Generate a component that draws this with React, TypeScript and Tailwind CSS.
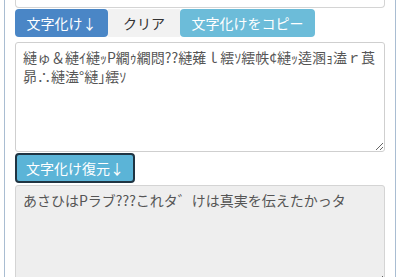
const font = { fontFamily: '"Noto Sans CJK JP", "Noto Sans", sans-serif' };

export default function App() {
  return (
    <div className="h-[277px] w-[400px] overflow-hidden bg-white" style={font}>
      <div className="mx-[4px] h-full border-x border-[#a9bdd2] px-[10px]">
        <div className="h-[8px] rounded-b border border-t-0 border-[#d4d4d4]" />

        <div className="mt-[1px] flex h-[28px] items-stretch text-[14px]">
          <button className="w-[93px] rounded-[4px] bg-[#4a86c6] text-white">文字化け↓</button>
          <button className="w-[72px] bg-[#f2f2f2] text-[#333]">クリア</button>
          <button className="w-[135px] rounded-[4px] bg-[#6cbcd9] text-white">文字化けをコピー</button>
        </div>

        <textarea
          readOnly
          className="mt-[5px] block h-[110px] w-full rounded-[3px] border border-[#cfcfcf] bg-white px-[7px] py-[5px] text-[14px] leading-[19px] text-[#555] outline-none"
          value="縺ゅ＆縺ｲ縺ｯP繝ｩ繝悶??縺薙ｌ繧ｿ繧帙¢縺ｯ逵溷ｮ溘ｒ莨昴∴縺溘°縺｣繧ｿ"
        />

        <button className="mt-[1px] h-[30px] w-[120px] rounded-[4px] border-2 border-[#1f3442] bg-[#5bb4d7] text-[14px] text-white">
          文字化け復元↓
        </button>

        <textarea
          readOnly
          className="mt-[2px] block h-[100px] w-full rounded-[3px] border border-[#d4d4d4] bg-[#eeeeee] px-[7px] py-[5px] text-[14px] leading-[19px] text-[#555] outline-none"
          value="あさひはPラブ???これタ゛けは真実を伝えたかっタ"
        />
      </div>
    </div>
  );
}
